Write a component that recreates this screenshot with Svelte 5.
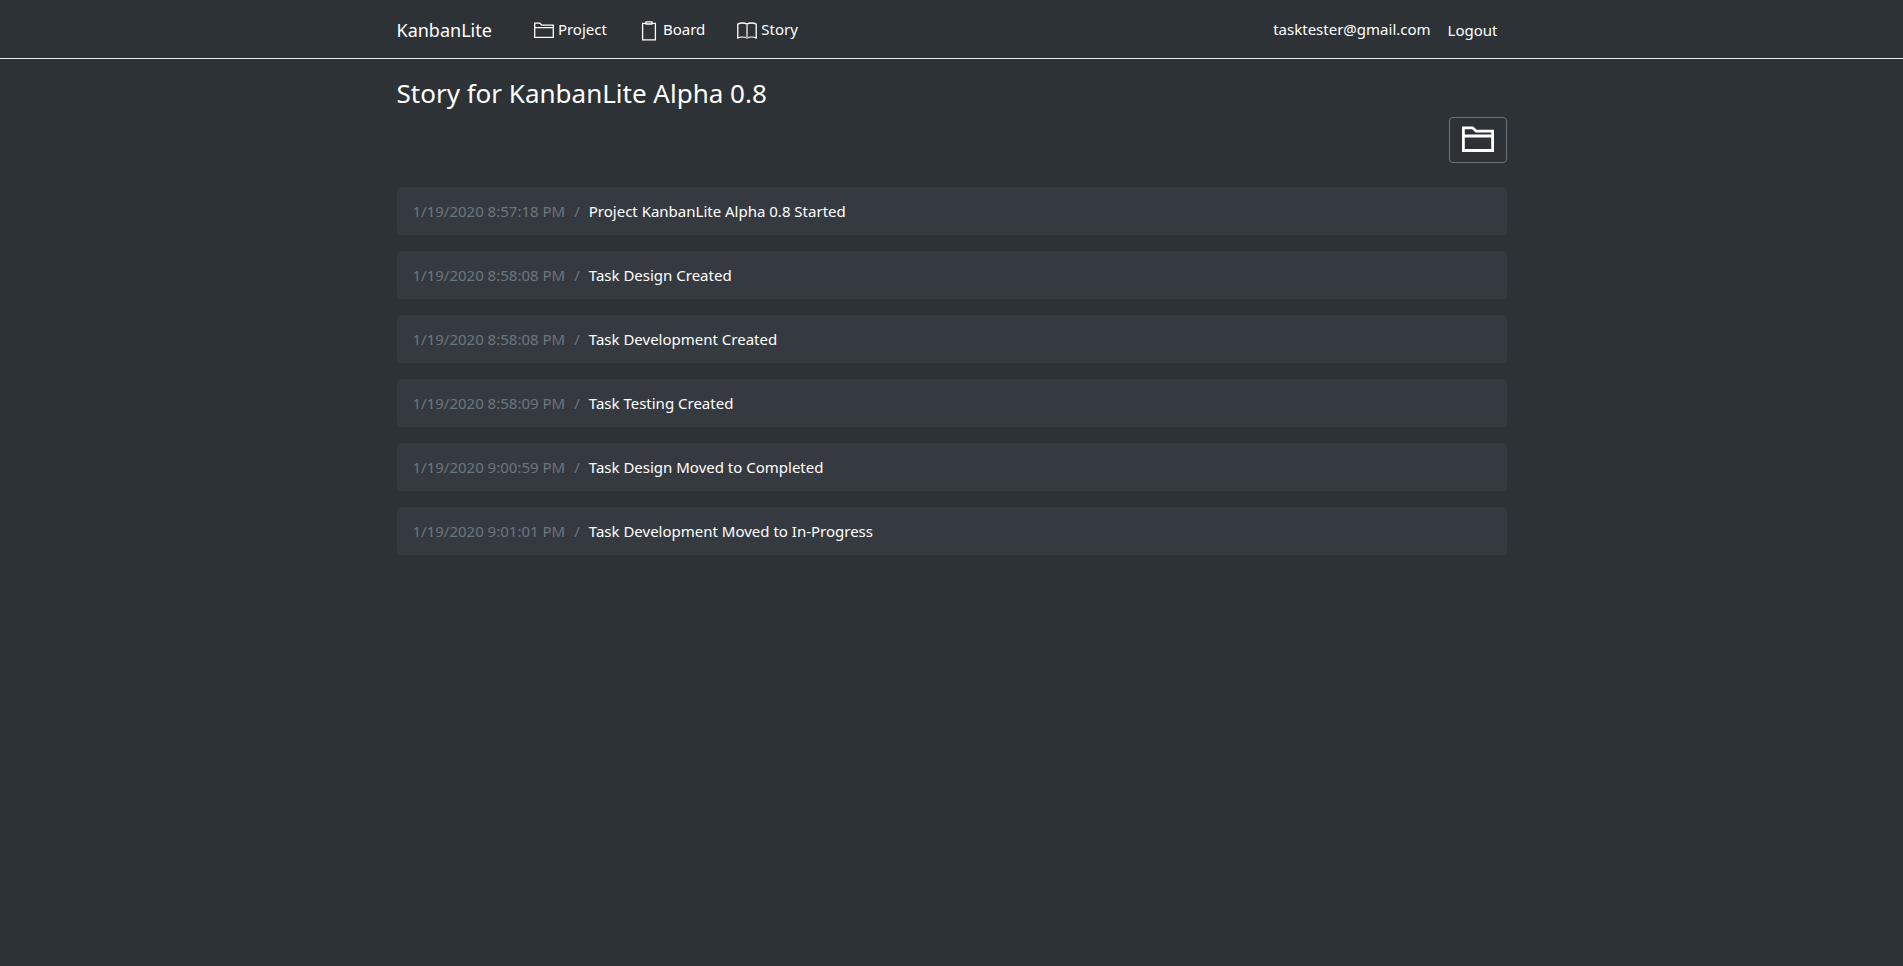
<script>
  const events = [
    { time: '1/19/2020 8:57:18 PM', text: 'Project KanbanLite Alpha 0.8 Started' },
    { time: '1/19/2020 8:58:08 PM', text: 'Task Design Created' },
    { time: '1/19/2020 8:58:08 PM', text: 'Task Development Created' },
    { time: '1/19/2020 8:58:09 PM', text: 'Task Testing Created' },
    { time: '1/19/2020 9:00:59 PM', text: 'Task Design Moved to Completed' },
    { time: '1/19/2020 9:01:01 PM', text: 'Task Development Moved to In-Progress' }
  ];
</script>

<header>
  <div class="container bar">
    <a class="brand" href="#home">KanbanLite</a>
    <nav>
      <a href="#project">
        <svg viewBox="0 0 20 20" aria-hidden="true">
          <path d="M.7 16.4V2.2h5.1l2.1 2h11.4v12.2zM.7 6.6h18.6" />
        </svg>
        <span>Project</span>
      </a>
      <a href="#board">
        <svg viewBox="0 0 20 20" aria-hidden="true">
          <path d="M7 2.3H3.6v16.6h12.8V2.3H13M7.1.8h5.8V3H7.1z" />
        </svg>
        <span>Board</span>
      </a>
      <a href="#story">
        <svg viewBox="0 0 20 20" aria-hidden="true">
          <path d="M10 3.1C7.6 1.6 3.2 1.6.8 3.1V17c2.4-1.2 6.8-1.2 9.2 0 2.4-1.2 6.8-1.2 9.2 0V3.1c-2.4-1.5-6.8-1.5-9.2 0z" />
          <path class="spine" d="M10 3.4v13.9" />
        </svg>
        <span>Story</span>
      </a>
    </nav>
    <div class="account">
      <a href="#account">tasktester@gmail.com</a>
      <button class="logout" type="button">Logout</button>
    </div>
  </div>
</header>

<main class="container">
  <h1>Story for KanbanLite Alpha 0.8</h1>
  <div class="actions">
    <button class="open" type="button" aria-label="Open project">
      <svg viewBox="0 0 32 32" aria-hidden="true">
        <path d="M1.4 26.5V3.8h9.2l3.6 3.4h16.4v19.3zM1.4 12h29.2" />
      </svg>
    </button>
  </div>
  <ul>
    {#each events as event}
      <li>
        <time>{event.time}</time>
        <span class="slash">/</span>
        <span>{event.text}</span>
      </li>
    {/each}
  </ul>
</main>

<style>
  :global(body) {
    background: #2d3236;
    color: #fff;
    font: 15px/24px "Noto Sans", "Open Sans", sans-serif;
  }

  .container {
    box-sizing: border-box;
    max-width: 1140px;
    margin: 0 auto;
    padding: 0 15px;
  }

  header {
    border-bottom: 1px solid #e9ecef;
  }

  .bar {
    display: flex;
    align-items: center;
    height: 58px;
  }

  a {
    color: #fff;
    text-decoration: none;
  }

  .brand {
    margin-right: 42px;
    padding-top: 2px;
    font-size: 18px;
    line-height: 30px;
  }

  nav {
    display: flex;
    gap: 32px;
  }

  nav a {
    display: flex;
    align-items: flex-end;
    gap: 4px;
  }

  svg {
    display: block;
    fill: none;
    stroke: #fff;
  }

  nav svg {
    width: 20px;
    height: 20px;
    stroke-width: 1.3;
  }

  nav .spine {
    stroke-width: 2;
    stroke: #a9abad;
  }

  .account {
    display: flex;
    align-items: center;
    gap: 8px;
    margin-left: auto;
  }

  button {
    border: 1px solid transparent;
    border-radius: 4px;
    background: none;
    color: #fff;
    font: inherit;
    cursor: pointer;
  }

  .logout {
    padding: 6px 8px 4px;
  }

  h1 {
    margin: 17px 0 7px;
    font-size: 26px;
    font-weight: 400;
    line-height: 34px;
  }

  .actions {
    display: flex;
    justify-content: flex-end;
    margin-bottom: 24px;
  }

  .open {
    padding: 6px 12px;
    border-color: #6c757d;
  }

  .open svg {
    width: 32px;
    height: 32px;
    stroke-width: 2.8;
  }

  ul {
    display: grid;
    gap: 16px;
    margin: 0;
    padding: 0;
    list-style: none;
  }

  li {
    display: flex;
    gap: 9px;
    padding: 12px 16px;
    border-radius: 4px;
    background: #353a41;
  }

  time,
  .slash {
    color: #6c757d;
  }
</style>
